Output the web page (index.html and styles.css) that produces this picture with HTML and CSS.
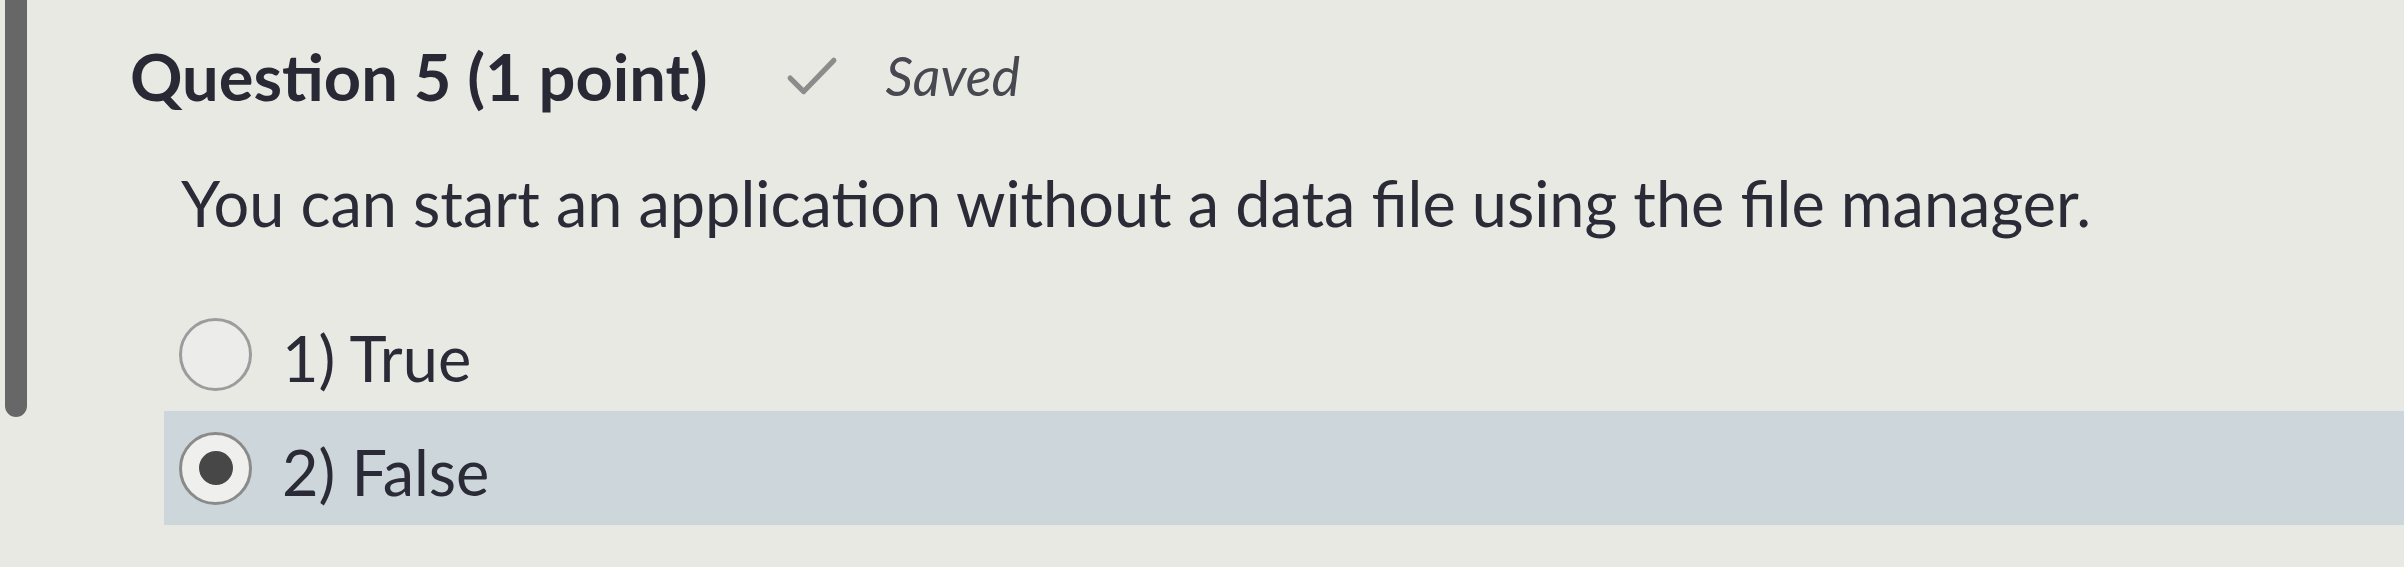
FILE: index.html
```html
<!DOCTYPE html>
<html lang="en">
<head>
<meta charset="utf-8">
<title>Question 5</title>
<link rel="stylesheet" href="styles.css">
</head>
<body>
<div class="question">
  <div class="marker"></div>
  <div class="content">
    <div class="header">
      <h2 class="title">Question 5 (1 point)</h2>
      <svg class="check" viewBox="0 0 50 40" width="52" height="42" aria-hidden="true">
        <path d="M4 21 L17 34 L46 4" fill="none" stroke="#8c8c8c" stroke-width="5" stroke-linecap="round" stroke-linejoin="round"/>
      </svg>
      <span class="saved">Saved</span>
    </div>
    <p class="prompt">You can start an application without a data file using the file manager.</p>
    <div class="options">
      <label class="option">
        <span class="radio"></span>
        <span class="label">1) True</span>
      </label>
      <label class="option selected">
        <span class="radio checked"><span class="dot"></span></span>
        <span class="label">2) False</span>
      </label>
    </div>
  </div>
</div>
</body>
</html>
```
FILE: styles.css
```css
html, body {
  margin: 0;
  padding: 0;
}
body {
  background: #e9e9e4;
  font-family: Lato, "Open Sans", "Liberation Sans", sans-serif;
  color: #2a2b36;
  width: 2404px;
  height: 567px;
  overflow: hidden;
}
.question {
  display: flex;
  align-items: flex-start;
}
.marker {
  width: 22px;
  height: 417px;
  margin-left: 5px;
  background: #676767;
  border-radius: 0 0 11px 11px;
  flex: none;
}
.content {
  flex: 1;
}
.header {
  display: flex;
  align-items: center;
  margin-left: 103px;
  padding-top: 36px;
  height: 80px;
}
.title {
  margin: 0;
  font-size: 65px;
  font-weight: 700;
  line-height: 80px;
  color: #282934;
}
.check {
  margin-left: 78px;
  margin-top: 2px;
}
.saved {
  margin-left: 48px;
  font-size: 54px;
  font-style: italic;
  line-height: 80px;
  color: #474850;
}
.prompt {
  margin: 49px 0 0 154px;
  font-size: 63px;
  line-height: 76px;
}
.options {
  margin: 56px 0 0 137px;
}
.option {
  display: flex;
  align-items: center;
  height: 114px;
  padding-left: 15px;
}
.option.selected {
  background: #cdd6da;
}
.radio {
  width: 67px;
  height: 67px;
  border: 3px solid #9c9c9c;
  border-radius: 50%;
  background: #ececea;
  display: flex;
  align-items: center;
  justify-content: center;
  flex: none;
}
.radio.checked {
  border-color: #8a8a8a;
  background: #efefed;
}
.dot {
  width: 34px;
  height: 34px;
  border-radius: 50%;
  background: #474747;
}
.label {
  margin-left: 30px;
  font-size: 63px;
  line-height: 76px;
  padding-top: 8px;
}
```
